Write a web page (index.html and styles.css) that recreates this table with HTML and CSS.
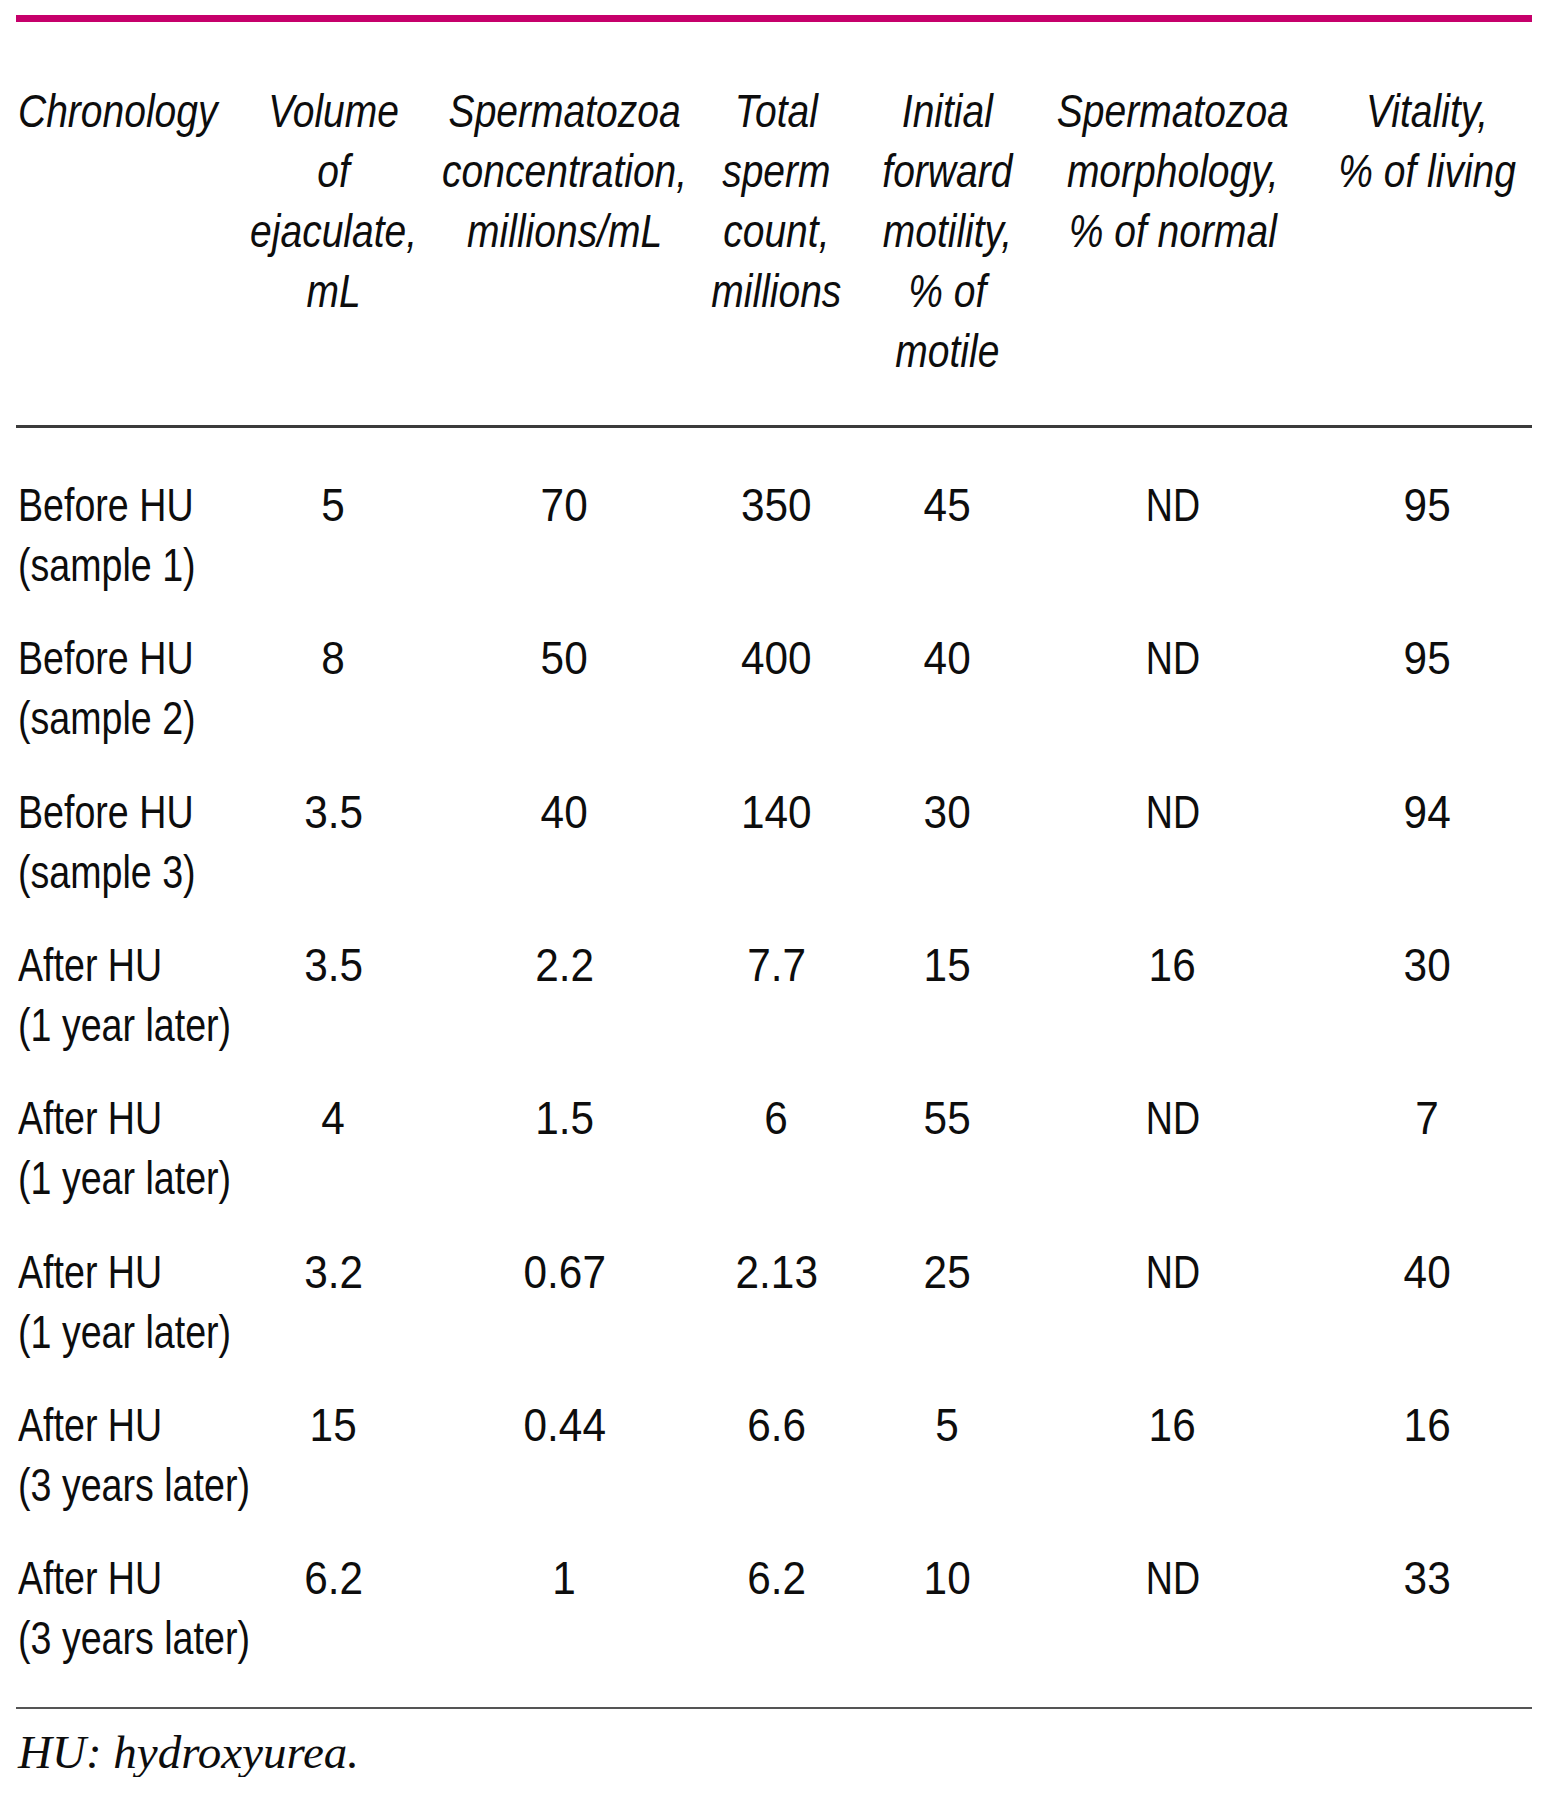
FILE: index.html
```html
<!DOCTYPE html>
<html lang="en">
<head>
<meta charset="utf-8">
<title>Semen parameters before and after HU</title>
<link rel="stylesheet" href="styles.css">
</head>
<body>
<div class="page">
  <div class="top-rule"></div>
  <div class="row head">
    <div class="cell first"><span class="t">Chronology</span></div>
    <div class="cell"><span class="t">Volume<br>of<br>ejaculate,<br>mL</span></div>
    <div class="cell"><span class="t">Spermatozoa<br>concentration,<br>millions/mL</span></div>
    <div class="cell"><span class="t">Total<br>sperm<br>count,<br>millions</span></div>
    <div class="cell"><span class="t">Initial<br>forward<br>motility,<br>% of<br>motile</span></div>
    <div class="cell"><span class="t">Spermatozoa<br>morphology,<br>% of normal</span></div>
    <div class="cell"><span class="t">Vitality,<br>% of living</span></div>
  </div>
  <div class="body">
    <div class="row">
      <div class="cell first"><span class="t">Before HU<br>(sample 1)</span></div>
      <div class="cell num"><span class="t">5</span></div><div class="cell num"><span class="t">70</span></div><div class="cell num"><span class="t">350</span></div><div class="cell num"><span class="t">45</span></div><div class="cell"><span class="t">ND</span></div><div class="cell num"><span class="t">95</span></div>
    </div>
    <div class="row">
      <div class="cell first"><span class="t">Before HU<br>(sample 2)</span></div>
      <div class="cell num"><span class="t">8</span></div><div class="cell num"><span class="t">50</span></div><div class="cell num"><span class="t">400</span></div><div class="cell num"><span class="t">40</span></div><div class="cell"><span class="t">ND</span></div><div class="cell num"><span class="t">95</span></div>
    </div>
    <div class="row">
      <div class="cell first"><span class="t">Before HU<br>(sample 3)</span></div>
      <div class="cell num"><span class="t">3.5</span></div><div class="cell num"><span class="t">40</span></div><div class="cell num"><span class="t">140</span></div><div class="cell num"><span class="t">30</span></div><div class="cell"><span class="t">ND</span></div><div class="cell num"><span class="t">94</span></div>
    </div>
    <div class="row">
      <div class="cell first"><span class="t">After HU<br>(1 year later)</span></div>
      <div class="cell num"><span class="t">3.5</span></div><div class="cell num"><span class="t">2.2</span></div><div class="cell num"><span class="t">7.7</span></div><div class="cell num"><span class="t">15</span></div><div class="cell num"><span class="t">16</span></div><div class="cell num"><span class="t">30</span></div>
    </div>
    <div class="row">
      <div class="cell first"><span class="t">After HU<br>(1 year later)</span></div>
      <div class="cell num"><span class="t">4</span></div><div class="cell num"><span class="t">1.5</span></div><div class="cell num"><span class="t">6</span></div><div class="cell num"><span class="t">55</span></div><div class="cell"><span class="t">ND</span></div><div class="cell num"><span class="t">7</span></div>
    </div>
    <div class="row">
      <div class="cell first"><span class="t">After HU<br>(1 year later)</span></div>
      <div class="cell num"><span class="t">3.2</span></div><div class="cell num"><span class="t">0.67</span></div><div class="cell num"><span class="t">2.13</span></div><div class="cell num"><span class="t">25</span></div><div class="cell"><span class="t">ND</span></div><div class="cell num"><span class="t">40</span></div>
    </div>
    <div class="row">
      <div class="cell first"><span class="t">After HU<br>(3 years later)</span></div>
      <div class="cell num"><span class="t">15</span></div><div class="cell num"><span class="t">0.44</span></div><div class="cell num"><span class="t">6.6</span></div><div class="cell num"><span class="t">5</span></div><div class="cell num"><span class="t">16</span></div><div class="cell num"><span class="t">16</span></div>
    </div>
    <div class="row">
      <div class="cell first"><span class="t">After HU<br>(3 years later)</span></div>
      <div class="cell num"><span class="t">6.2</span></div><div class="cell num"><span class="t">1</span></div><div class="cell num"><span class="t">6.2</span></div><div class="cell num"><span class="t">10</span></div><div class="cell"><span class="t">ND</span></div><div class="cell num"><span class="t">33</span></div>
    </div>
  </div>
  <p class="note">HU: hydroxyurea.</p>
</div>
</body>
</html>
```

FILE: styles.css
```css
html, body {
  margin: 0;
  padding: 0;
  background: #ffffff;
}

.page {
  width: 1516px;
  margin-left: 16px;
  padding-top: 15px;
  color: #0d0d0d;
  font-family: "Liberation Sans", Arial, sans-serif;
  font-size: 47px;
  line-height: 60px;
}

.top-rule {
  height: 7px;
  background: #c6006b;
}

.row {
  display: grid;
  grid-template-columns: 202px 231px 231px 193px 149px 301px 209px;
}

.cell {
  display: flex;
  justify-content: center;
  min-width: 0;
}

.cell .t {
  display: block;
  flex: none;
  white-space: nowrap;
  text-align: center;
  transform: scaleX(0.8);
  transform-origin: center top;
}

.cell.num .t {
  transform: scaleX(0.9);
}

.cell.first {
  justify-content: flex-start;
  padding-left: 2px;
}

.cell.first .t {
  text-align: left;
  transform-origin: left top;
}

.head {
  font-style: italic;
  padding-top: 59px;
  padding-bottom: 44px;
  border-bottom: 3px solid #3b3b3b;
}

.head .cell .t {
  transform: scaleX(0.83);
}

.body {
  display: flex;
  flex-direction: column;
  gap: 33.33px;
  padding-top: 47px;
  padding-bottom: 39px;
  border-bottom: 2px solid #555555;
}

.note {
  margin: 18px 0 0 2px;
  font-family: "Liberation Serif", "DejaVu Serif", serif;
  font-style: italic;
  font-size: 47px;
  line-height: 50px;
}
```
